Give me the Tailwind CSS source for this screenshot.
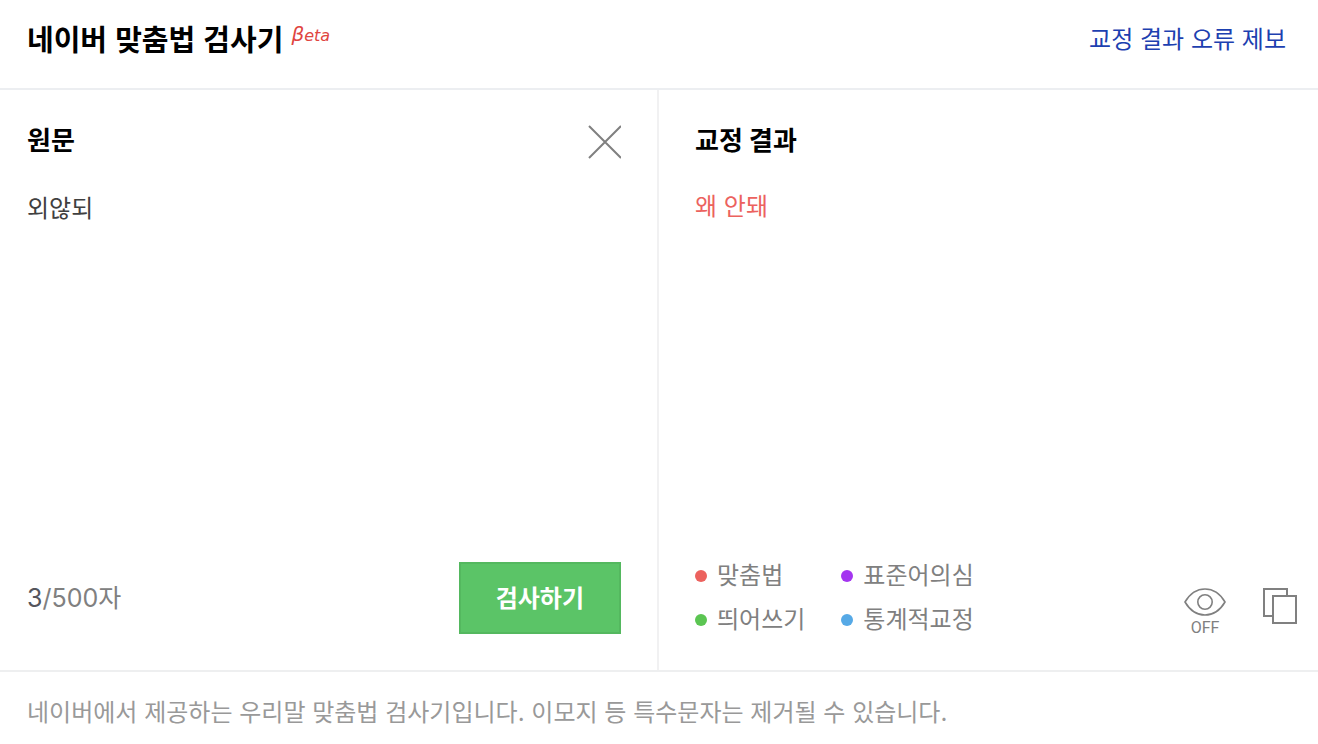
<!DOCTYPE html>
<html lang="ko">
<head>
  <meta charset="UTF-8" />
  <meta name="viewport" content="width=device-width, initial-scale=1.0" />
  <title>네이버 맞춤법 검사기</title>
  <script src="https://cdn.jsdelivr.net/npm/@tailwindcss/browser@4"></script>
</head>
<body class="min-h-screen flex flex-col bg-white text-2xl text-[#808080] font-['Inter','Noto_Sans_CJK_KR',sans-serif]">
  <!-- Header -->
  <header class="flex items-start justify-between h-[90px] pl-[27px] pr-8 pt-5 border-b-2 border-[#eceef1]">
    <h1 class="flex items-start gap-2 font-['Noto_Sans_CJK_KR',sans-serif] text-[29px] leading-9 font-bold text-black">
      네이버 맞춤법 검사기
      <span class="font-['DejaVu_Sans',sans-serif] text-base leading-7 font-normal italic text-[#e0453f]"><span class="text-xl leading-7">β</span>eta</span>
    </h1>
    <a href="#" class="leading-10 text-[#1d40b0]">교정 결과 오류 제보</a>
  </header>

  <main class="grow grid grid-cols-2">
    <!-- Source text -->
    <section class="flex flex-col pl-[27px] pr-9 pb-9 border-r-2 border-[#f1f1f2]">
      <div class="flex items-start justify-between pt-[31px]">
        <h2 class="text-[26px] leading-10 font-bold text-black"><label for="source">원문</label></h2>
        <button type="button" id="clear" aria-label="지우기" class="pt-1">
          <svg class="w-[34px] h-[34px]" viewBox="0 0 34 34" fill="none" stroke="#808080" stroke-width="2">
            <path d="M2 1l32 32M34 1L2 33" />
          </svg>
        </button>
      </div>
      <textarea id="source" maxlength="500" spellcheck="false" class="grow mt-[30px] resize-none leading-9 text-[#404040] focus:outline-none">외않되</textarea>
      <div class="flex items-center justify-between">
        <p class="pt-0.5 text-[25px]"><span id="count" class="text-[#55555c]">3</span>/500자</p>
        <button type="button" class="px-[35px] pt-0.5 h-[72px] border-2 border-[#54b85f] bg-[#5bc467] font-bold text-white">검사하기</button>
      </div>
    </section>

    <!-- Corrected text -->
    <section class="flex flex-col pl-9 pr-5 pb-8">
      <h2 class="pt-[31px] text-[26px] leading-10 font-bold text-black">교정 결과</h2>
      <p class="grow mt-7 leading-9 text-[#ec625e]">왜 안돼</p>
      <div class="flex items-end justify-between">
        <ul class="grid grid-cols-[auto_auto] gap-x-9 gap-y-2 leading-9">
          <li class="flex items-center gap-2.5"><span class="size-3 rounded-full bg-[#ec625e]"></span>맞춤법</li>
          <li class="flex items-center gap-2.5"><span class="size-3 rounded-full bg-[#a435f0]"></span>표준어의심</li>
          <li class="flex items-center gap-2.5"><span class="size-3 rounded-full bg-[#5bc552]"></span>띄어쓰기</li>
          <li class="flex items-center gap-2.5"><span class="size-3 rounded-full bg-[#56a9e6]"></span>통계적교정</li>
        </ul>
        <div class="flex items-start gap-9">
          <button type="button" class="flex flex-col items-center gap-0.5">
            <svg class="w-[42px] h-7" viewBox="0 0 42 28" fill="none" stroke="#808080" stroke-width="1.6">
              <path d="M1 14C6 5.500 13 1 21 1S36 5.500 41 14C36 22.500 29 27 21 27S6 22.500 1 14Z" />
              <circle cx="21" cy="14" r="7.200" />
            </svg>
            <span class="font-['Roboto',sans-serif] text-base leading-5">OFF</span>
          </button>
          <button type="button" aria-label="복사">
            <svg class="w-9 h-9" viewBox="0 0 36 36" fill="none" stroke="#808080" stroke-width="2">
              <path d="M11 28H2V1H25V8" />
              <path d="M11 8H34V35H11Z" />
            </svg>
          </button>
        </div>
      </div>
    </section>
  </main>

  <footer class="h-[74px] pl-[27px] pt-5 border-t-2 border-[#eeeff0] leading-[42px] text-[#999]">
    네이버에서 제공하는 우리말 맞춤법 검사기입니다. 이모지 등 특수문자는 제거될 수 있습니다.
  </footer>

  <script>
    const source = document.getElementById("source");
    const count = document.getElementById("count");

    source.addEventListener("input", () => {
      count.textContent = source.value.length;
    });

    document.getElementById("clear").addEventListener("click", () => {
      source.value = "";
      count.textContent = 0;
    });
  </script>
</body>
</html>
